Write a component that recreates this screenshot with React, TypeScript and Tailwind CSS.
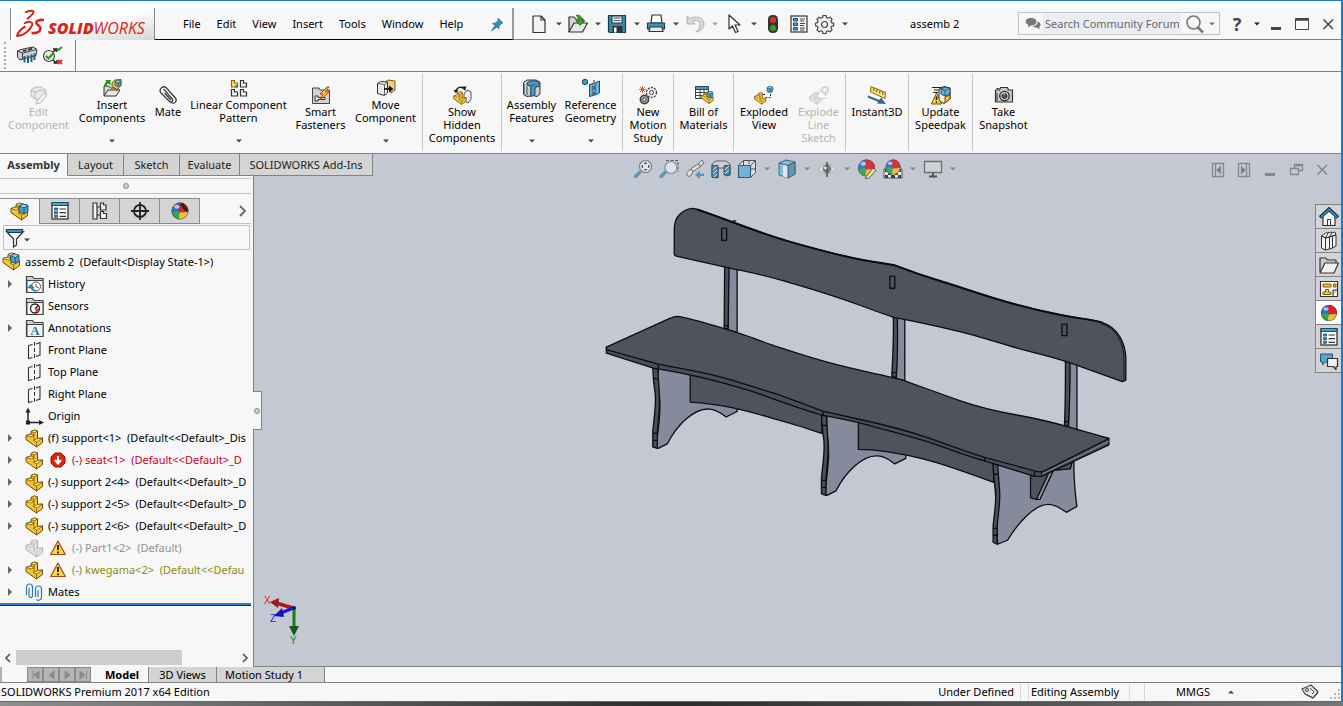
import React, { useState } from 'react';

type IconProps = { className?: string };

const PartShape = ({ fill = '#f5c52c', light = '#ffe58a', stroke = '#6b4a08' }: { fill?: string; light?: string; stroke?: string }) => (
  <g stroke={stroke} strokeWidth="1" strokeLinejoin="round">
    <path d="M1 6.500 6 5V2.500L9.500 1l3 1v7.500l5-.500v4.500l-6 4.500L1 10.500z" fill={fill} />
    <path d="M6 2.500 9.500 1l3 1L9 4zM1 6.500 6 5l3 1.500L6 8zM11.500 13l-3-1.500 4-2 5-.500z" fill={light} strokeWidth="0.7" />
    <path d="M9 4v7.500M11.500 13v5" fill="none" strokeWidth="0.7" />
  </g>
);

const Cube = ({ x = 8, y = 1, s = 1 }: { x?: number; y?: number; s?: number }) => (
  <g transform={`translate(${x} ${y}) scale(${s})`} stroke="#1d4e68" strokeWidth="0.9" strokeLinejoin="round">
    <path d="M0 2.500 4 .5 9 2v6L5 10.500 0 8.500z" fill="#4f9cc4" />
    <path d="M0 2.500 4 .5 9 2 5 4.200z" fill="#a9dcf2" />
    <path d="M5 4.200v6.300" />
  </g>
);

const Svg = ({ size = 20, vb = 20, className = '', children }: { size?: number; vb?: number; className?: string; children: React.ReactNode }) => (
  <svg width={size} height={size} viewBox={`0 0 ${vb} ${vb}`} className={`shrink-0 ${className}`} fill="none" aria-hidden="true">
    {children}
  </svg>
);

const PartIcon = ({ muted }: { muted?: boolean }) => (
  <Svg size={19} vb={19}>
    {muted ? <PartShape fill="#e2e2e2" light="#f2f2f2" stroke="#b0b0b0" /> : <PartShape />}
  </Svg>
);

const AssemblyIcon = () => (
  <Svg size={19} vb={19}>
    <PartShape />
    <Cube x={8.5} y={1.5} s={0.95} />
  </Svg>
);

const Ball = ({ cx = 10, cy = 10, r = 8 }: { cx?: number; cy?: number; r?: number }) => (
  <g transform={`translate(${cx} ${cy}) scale(${r / 8})`}>
    <circle r="8" fill="#2f6fd0" />
    <path d="M-1-7.900A8 8 0 0 1 7.900 1 L0 1.500C-2-1-2-5-1-7.900z" fill="#d8252c" />
    <path d="M7.900 1A8 8 0 0 1-1 7.900C-1 5-1 3 0 1.500z" fill="#eec32d" />
    <path d="M-1 7.900A8 8 0 0 1-7.900 1C-5 0-2 0 0 1.500-1 3-1 5-1 7.900z" fill="#35a843" />
    <circle r="7.600" stroke="#333" strokeOpacity="0.5" strokeWidth="0.8" fill="none" />
    <ellipse cx="-3" cy="-4" rx="2.600" ry="1.800" fill="#fff" fillOpacity="0.6" />
  </g>
);

const ListShape = () => (
  <g>
    <rect x="2" y="2" width="16" height="16" fill="#fff" stroke="#333" strokeWidth="1.300" />
    <rect x="2" y="1.500" width="16" height="3" fill="#4aa3cf" stroke="#1d4e68" />
    <path d="M4.500 7h3v2h-3zM4.500 10.700h3v2h-3zM4.500 14.300h3v2h-3z" fill="#4aa3cf" stroke="#1d4e68" strokeWidth="0.9" />
    <path d="M9.500 8h6.500M9.500 11.700h6.500M9.500 15.300h6.500" stroke="#333" strokeWidth="1.200" />
  </g>
);

const Caret = ({ className = 'text-[#444]' }: IconProps) => (
  <svg width="6" height="4" viewBox="0 0 6 4" className={`shrink-0 ${className}`} aria-hidden="true">
    <path d="M0 .5h6L3 3.500z" fill="currentColor" />
  </svg>
);

const Folder = ({ children }: { children: React.ReactNode }) => (
  <Svg size={19} vb={19}>
    <path d="M1.500 17.500V1.500h6l1.500 2h9v14z" fill="#cfcfcf" stroke="#444" strokeWidth="1.200" />
    <path d="M2 5.500h16v12H2z" fill="#f3f3f3" stroke="#444" />
    {children}
  </Svg>
);

const HistoryIcon = () => (
  <Folder>
    <circle cx="11" cy="11.500" r="4.500" fill="#fff" stroke="#555" />
    <path d="M11 9v2.500l2.500 1.500" stroke="#444" />
    <path d="M11 16c-3 0-5-2-5-4.500M3.500 12.500 6 10l2.500 2.500z" stroke="#2c83b4" strokeWidth="1.300" fill="#2c83b4" />
  </Folder>
);
const SensorsIcon = () => (
  <Folder>
    <circle cx="10" cy="11.500" r="4.500" fill="#fff" stroke="#222" strokeWidth="1.300" />
    <path d="m10 12 3-3.500" stroke="#222" strokeWidth="1.200" />
    <path d="M10.500 11.500h3.500a4 4 0 0 1-3.500 4z" fill="#e23a1e" />
  </Folder>
);
const AnnotationsIcon = () => (
  <Folder>
    <text x="10" y="16" textAnchor="middle" fontFamily="Liberation Serif, serif" fontWeight="bold" fontSize="13" fill="#2a7ba6">A</text>
  </Folder>
);
const PlaneIcon = () => (
  <Svg size={19} vb={19}>
    <path d="M3.500 4.500v13l4-1M11 15.500l4-1.500V1.500l-4 1.500M3.500 4.500l4-1" stroke="#333" strokeWidth="1.100" />
    <path d="M9.500 1v17" stroke="#333" strokeDasharray="4 2" />
  </Svg>
);
const OriginIcon = () => (
  <Svg size={19} vb={19}>
    <path d="M3 15.500V4M3 15.500h12" stroke="#222" strokeWidth="1.500" />
    <path d="M.500 5.500 3 .5l2.500 5zM14 13l5 2.500-5 2.500z" fill="#222" />
    <rect x="1" y="13.500" width="4" height="4" fill="#222" />
  </Svg>
);
const MatesIcon = () => (
  <Svg size={19} vb={19}>
    <path d="M1.500 12V4a3 3 0 0 1 6 0v9.500a2 2 0 0 1-3.500 0V5" stroke="#2c7ba6" strokeWidth="1.200" />
    <path d="M10.500 14V6a3 3 0 0 1 6 0v8.500a3 3 0 0 1-5 2M13 7v7" stroke="#2c7ba6" strokeWidth="1.200" />
  </Svg>
);
const WarningIcon = () => (
  <Svg size={16} vb={16}>
    <path d="M8 1 15.300 14.500H.700z" fill="#ffd83a" stroke="#a5431a" strokeWidth="1.200" strokeLinejoin="round" />
    <path d="M8 5v5M8 11.500v1.700" stroke="#111" strokeWidth="1.800" />
  </Svg>
);
const ErrorIcon = () => (
  <Svg size={16} vb={16}>
    <path d="M5 1h6l4 4v6l-4 4H5l-4-4V5z" fill="#df2612" stroke="#8f1408" />
    <path d="M8 4v7M5 8l3 3.500L11 8" stroke="#fff" strokeWidth="2" />
  </Svg>
);

/* ribbon */

const ribbonIcons: Record<string, React.ReactNode> = {
  edit: (
    <g stroke="#b9b9b9" fill="#e9e9e9" strokeLinejoin="round">
      <path d="m2 5 4-3 6 0 5 3v6l-5 4-6-1-4-3zM2 5l4 2 6-2 5 2M6 7v7" />
      <path d="m8 16 7-8 3 2.500L11 18l-4 1z" fill="#f4f4f4" />
    </g>
  ),
  insert: (
    <g>
      <path d="M2 18V8h5l1.500 2H16v3" fill="#d8d8d8" stroke="#333" />
      <path d="m2 18 4-6h12l-4 6z" fill="#e8e8e8" stroke="#333" strokeLinejoin="round" />
      <path d="M3 9C3 6 4 5 6 4" stroke="#2a8a18" strokeWidth="2" />
      <path d="M3 2h5.500v5.500z" fill="#2a8a18" />
      <path d="m10 5 3-3 6-.500v6l-4 4-5-3z" fill="#f5c52c" stroke="#6b4a08" strokeLinejoin="round" />
      <Cube x={13} y={2} s={0.65} />
    </g>
  ),
  mate: (
    <g stroke="#3a3a3a" strokeWidth="1.300" strokeLinecap="round">
      <path d="m6 4.500 8.500 9.500a2 2 0 0 1-3 2.500L3 8C.500 5 4-.500 8.500 3l8.500 9.500c3 3.500-.500 7-4 5M7 8.500l5.500 6" />
    </g>
  ),
  linear: (
    <g strokeWidth="1.200">
      <path d="M2.500 2.500h3v2.500h3v4h-6z" fill="#f9e46c" stroke="#8a6a10" />
      <path d="M6 7h3v2.500H6z" fill="#2c83b4" />
      <path d="M11.500 2.500h3v2.500h3v4h-6zM2.500 11.500h3V14h3v4h-6zM11.500 11.500h3V14h3v4h-6z" fill="#f3f3f3" stroke="#333" />
    </g>
  ),
  smart: (
    <g>
      <path d="M1.500 18.500V3H8l1 2h9.500v13.500z" fill="#d2d2d2" stroke="#444" />
      <path d="M4 16v-5h3v1.500h7v2H7V16z" fill="#eee" stroke="#333" />
      <path d="m16 2-7 7h3l-3 6 9-8h-4l4-5z" fill="#ffcf2a" stroke="#b9400f" strokeLinejoin="round" />
    </g>
  ),
  move: (
    <g strokeLinejoin="round">
      <path d="m9 4 3-2 7 1v9l-4 3z" fill="#ecd083" stroke="#7a5a12" />
      <path d="m1.500 5.500 3-2 7 .5v11l-3 2.500-7-2z" fill="#e9e9e9" stroke="#333" />
      <path d="m1.500 5.500 7 1 3-2.500M8.500 6.500V17" stroke="#555" strokeWidth="0.9" />
      <path d="M8 11h6" stroke="#111" strokeWidth="1.700" />
      <path d="m13 7.500 4.500 3.500-4.500 3.500z" fill="#111" />
    </g>
  ),
  show: (
    <g>
      <path d="m12 9 3-4 4 2v7l-3 4-4-2z" fill="#eee" stroke="#555" strokeLinejoin="round" />
      <g transform="translate(1 6) scale(.75)"><PartShape /></g>
      <path d="M4 6c1-4 6-5 8-2" stroke="#222" strokeWidth="1.500" />
      <path d="M1.500 5h5L4 8.500zM10 1.500h4.500L13 6z" fill="#222" />
    </g>
  ),
  features: (
    <g strokeLinejoin="round">
      <path d="M1.500 4.500 5 2h9l4 2v12l-3 2.500-4-1V8H9v10l-4 .5-3.500-2z" fill="#cdcdcd" stroke="#333" />
      <path d="m5 5 3-2h6l3 2v4l-3-1v2h-1v7l-4 1.500V8l-4-1z" fill="#4d9cc4" stroke="#1d4e68" />
      <path d="M9 8 13 6.500M2 6v10M5 8v9" stroke="#26566f" />
    </g>
  ),
  reference: (
    <g>
      <circle cx="4" cy="4" r="2.700" fill="#4a96bd" stroke="#1d4e68" />
      <path d="M8.500 6.500 12 5.500v12l-3.500 1zM14 5l4.500-2v12L14 17z" fill="#62b1d8" stroke="#1d4e68" />
      <path d="M13 2v17" stroke="#222" strokeDasharray="4 2" />
    </g>
  ),
  motion: (
    <g>
      <circle cx="13.500" cy="7.500" r="5" stroke="#444" strokeWidth="1.300" strokeDasharray="2 1.200" fill="#eee" />
      <circle cx="13.500" cy="7.500" r="2" fill="#fff" stroke="#444" />
      <circle cx="6.500" cy="14.500" r="4.200" stroke="#444" strokeWidth="1.500" fill="#999" />
      <circle cx="6.500" cy="14.500" r="1.500" fill="#fff" stroke="#444" />
      <path d="M4.500 1v7M1 4.500h7M2 2l5 5M7 2 2 7" stroke="#d8671a" />
    </g>
  ),
  bom: (
    <g>
      <path d="M1.500 1.500h13v12h-13z" fill="#fff" stroke="#234b63" />
      <path d="M1.500 1.500h13v3h-13z" fill="#4a96bd" stroke="#234b63" />
      <path d="M1.500 7.500h13M1.500 10.500h13M6 4.500v9M10 4.500v9" stroke="#444" />
      <g transform="translate(7 6) scale(.7)"><PartShape /></g>
      <Cube x={13} y={6} s={0.65} />
    </g>
  ),
  exploded: (
    <g>
      <g transform="translate(0 7) scale(.68)"><PartShape /></g>
      <Cube x={13} y={1} s={0.65} />
      <path d="M9 9.500h2.500M16.500 9v3.500H12" stroke="#222" strokeDasharray="2 1.300" />
    </g>
  ),
  explodeLine: (
    <g opacity="0.8">
      <g transform="translate(0 7) scale(.68)"><PartShape fill="#e2e2e2" light="#f2f2f2" stroke="#a8a8a8" /></g>
      <path d="m13 3 3-1.500L19 3v4l-3 1.500L13 7z" fill="#eee" stroke="#b0b0b0" />
      <path d="M9 9.500 11.500 5M16.500 9v5H12" stroke="#aaa" strokeDasharray="2 1.300" />
    </g>
  ),
  instant: (
    <g>
      <path d="m4 1.500 14.500 6-.5 6L3.500 7z" fill="#f9e07a" stroke="#8a6414" />
      <path d="m7 3-.3 3M10 4.200l-.3 3M13 5.500l-.3 3M16 6.700l-.3 3" stroke="#6b4a08" />
      <path d="m1 11.500 12 5" stroke="#2d6c8f" strokeWidth="2" />
      <path d="m14 12.500 5 6.500-9-.5z" fill="#2d6c8f" />
    </g>
  ),
  update: (
    <g strokeLinejoin="round">
      <path d="M1 2.500h10M3 5h6M2 7.500h5" stroke="#222" strokeWidth="1.200" />
      <path d="m8 4 5-2.500 6 1.500v11l-6 4.500-5-3z" fill="#f4f4f4" stroke="#222" />
      <path d="m10 4 4-2 5 1v6l-5 2-4-2z" fill="#62b1d8" stroke="#1d4e68" />
      <path d="m10 4 4 1.500 5-2.500M14 5.500V11" stroke="#1d4e68" strokeWidth="0.8" />
      <path d="m14 12 5-2v4l-5 4z" fill="#f5c52c" stroke="#6b4a08" />
      <path d="m5.500 8 5 11H.500z" fill="#ffd832" stroke="#7a4a00" />
      <path d="M5.500 11.500v3.500M5.500 16.200v1.500" stroke="#111" strokeWidth="1.600" />
    </g>
  ),
  camera: (
    <g>
      <path d="M1.500 5h4l1-2.500h7L14.500 5h4v12h-17z" fill="#c9c9c9" stroke="#333" strokeWidth="1.200" />
      <circle cx="10.500" cy="11" r="4.700" fill="#efefef" stroke="#222" strokeWidth="1.300" />
      <circle cx="10.500" cy="11" r="2.600" fill="#555" stroke="#222" />
      <path d="M2.500 3.500h2.500M3 8v8" stroke="#333" />
      <path d="m9.500 9.500 1.500-.5" stroke="#fff" />
    </g>
  ),
};

interface RibbonItem {
  icon: string;
  lines: string[];
  width: string;
  menu?: boolean;
  disabled?: boolean;
}

const ribbonGroups: RibbonItem[][] = [
  [
    { icon: 'edit', lines: ['Edit', 'Component'], width: 'w-[71px]', disabled: true },
    { icon: 'insert', lines: ['Insert', 'Components'], width: 'w-[76px]', menu: true },
    { icon: 'mate', lines: ['Mate'], width: 'w-9' },
    { icon: 'linear', lines: ['Linear Component', 'Pattern'], width: 'w-[105px]', menu: true },
    { icon: 'smart', lines: ['Smart', 'Fasteners'], width: 'w-[59px]' },
    { icon: 'move', lines: ['Move', 'Component'], width: 'w-[71px]', menu: true },
  ],
  [{ icon: 'show', lines: ['Show', 'Hidden', 'Components'], width: 'w-[76px]' }],
  [
    { icon: 'features', lines: ['Assembly', 'Features'], width: 'w-[57px]', menu: true },
    { icon: 'reference', lines: ['Reference', 'Geometry'], width: 'w-[61px]', menu: true },
  ],
  [{ icon: 'motion', lines: ['New', 'Motion', 'Study'], width: 'w-12' }],
  [{ icon: 'bom', lines: ['Bill of', 'Materials'], width: 'w-[57px]' }],
  [
    { icon: 'exploded', lines: ['Exploded', 'View'], width: 'w-[58px]' },
    { icon: 'explodeLine', lines: ['Explode', 'Line', 'Sketch'], width: 'w-[51px]', disabled: true },
  ],
  [{ icon: 'instant', lines: ['Instant3D'], width: 'w-[60px]' }],
  [{ icon: 'update', lines: ['Update', 'Speedpak'], width: 'w-[61px]' }],
  [{ icon: 'camera', lines: ['Take', 'Snapshot'], width: 'w-[59px]' }],
];

const Ribbon = () => (
  <div className="flex h-[82px] border-b border-[#828282] pl-0.5">
    {ribbonGroups.map((group, g) => (
      <div key={g} className={`my-0.5 flex px-px ${g < ribbonGroups.length - 1 ? 'border-r border-[#c6c6c6]' : ''}`}>
        {group.map(item => (
          <button
            key={item.icon}
            disabled={item.disabled}
            className={`flex flex-col items-center whitespace-nowrap leading-[13px] ${item.width} ${item.menu ? 'pt-1' : 'pt-[11px]'} ${item.disabled ? 'text-[#b4b4b4]' : 'text-black'}`}
          >
            <Svg>{ribbonIcons[item.icon]}</Svg>
            {item.lines.map(line => <span key={line}>{line}</span>)}
            {item.menu && <Caret className="mt-auto mb-2 text-[#444]" />}
          </button>
        ))}
      </div>
    ))}
  </div>
);

/* title bar */

const quickTools: { name: string; menu?: boolean; muted?: boolean; art: React.ReactNode }[] = [
  { name: 'New', menu: true, art: <path d="M4 2h8l4 4v12.500H4zM12 2v4h4" fill="#f2f2f2" stroke="#333" strokeWidth="1.200" strokeLinejoin="round" /> },
  {
    name: 'Open', menu: true, art: (
      <g strokeLinejoin="round">
        <path d="M1 18V3h5l1.500 2H15v4" fill="#d6d6d6" stroke="#333" strokeWidth="1.200" />
        <path d="m1 18 5-9h13.500l-5 9z" fill="#e8e8e8" stroke="#333" strokeWidth="1.200" />
        <path d="M8 1.500c4-1 6 1 6 5h3l-5 5-4-5h3c0-2-1-4-3-5z" fill="#3aa51e" stroke="#1f6b0d" strokeWidth="0.8" />
      </g>
    ),
  },
  {
    name: 'Save', menu: true, art: (
      <g>
        <path d="M1.500 1.500h17v17h-16l-1-1z" fill="#3c86a8" stroke="#173f54" strokeWidth="1.200" />
        <path d="M5 2h10v7H5z" fill="#f0f0f0" stroke="#173f54" />
        <path d="M6.500 4h7M6.500 6.500h7" stroke="#555" />
        <path d="M5.500 12h10v6.500h-10z" fill="#333" />
        <path d="M7 13.500h2.500v5H7z" fill="#fff" />
      </g>
    ),
  },
  {
    name: 'Print', menu: true, art: (
      <g strokeLinejoin="round">
        <path d="m5 9 1-8h9l1 8z" fill="#fff" stroke="#333" strokeWidth="1.200" />
        <path d="M1.500 9h17v6h-17z" fill="#3c93bd" stroke="#173f54" strokeWidth="1.200" />
        <path d="m4 13-1 4.500h14L16 13z" fill="#e9e9e9" stroke="#333" strokeWidth="1.200" />
      </g>
    ),
  },
  { name: 'Undo', menu: true, muted: true, art: <path d="M2 2v8h8L7.500 7.500C11 5 15 7 15 11c0 3-2 5-4 7 5-1 8-4 8-8C19 4 12 1 5.500 4.500z" fill="#d9d9d9" stroke="#b3b3b3" /> },
  { name: 'Select', menu: true, art: <path d="M5 1v14l3.500-3 3 6.500 2.500-1-3-6.500H16z" fill="#fff" stroke="#333" strokeWidth="1.200" strokeLinejoin="round" /> },
  {
    name: 'Rebuild', art: (
      <g>
        <rect x="5" y="1" width="10" height="18" rx="4.500" fill="#333" />
        <circle cx="10" cy="6" r="3" fill="#e0301c" /><circle cx="10" cy="14" r="3" fill="#3f9a24" />
      </g>
    ),
  },
  {
    name: 'File Properties', art: (
      <g>
        <rect x="2" y="2" width="16" height="16" fill="#f4f4f4" stroke="#333" strokeWidth="1.200" />
        <path d="M4.500 4.500h4v2.500h-4zM4.500 9h4v2.500h-4zM4.500 13.500h4V16h-4z" fill="#4aa3cf" stroke="#1d4e68" />
        <path d="M11 5h5M11 7h4M11 9.500h5M11 11.500h4M11 14h5M11 16h4" stroke="#444" />
      </g>
    ),
  },
  {
    name: 'Options', menu: true, art: (
      <g stroke="#444" transform="translate(-.5 -.5)">
        <path d="M8.500 2h3l.5 2 1.500.7 2-1 2 2-1 2 .6 1.500 2 .5v2.600l-2 .5-.6 1.500 1 2-2 2-2-1-1.500.7-.5 2h-3l-.5-2-1.500-.7-2 1-2-2 1-2-.6-1.500-2-.5V9.700l2-.5.6-1.500-1-2 2-2 2 1L8 4z" strokeWidth="1.200" fill="#f2f2f2" />
        <circle cx="10" cy="11" r="3" strokeWidth="1.200" />
      </g>
    ),
  },
];

const menus = ['File', 'Edit', 'View', 'Insert', 'Tools', 'Window', 'Help'];

const Logo = () => (
  <a href="#home" className="ml-2.5 flex w-[145px] shrink-0 items-center overflow-hidden border-x border-[#8a8a8a] bg-linear-to-br from-white via-white to-[#d6d6d6] pl-1 text-[#d9261c]">
    <svg width="33" height="30" viewBox="0 0 33 30" className="shrink-0" fill="none" stroke="currentColor" aria-hidden="true">
      <path d="M10 3.500C14 1 19.500 1 18.500 3.500 17.500 6 14.500 8 12 10" strokeWidth="2" />
      <path d="M9 14.500c5-3 9.500-2 8 2C15 21 8.500 27 2 27c1-3.500 4.500-7.500 8.500-9.500" strokeWidth="2" strokeLinejoin="round" />
      <path d="M29 11c-5-.5-8.500 1-7.500 3.300 1 2 4.500 3 4 5.700s-4 4.500-9 4" strokeWidth="2.600" />
    </svg>
    <span className="mt-2 font-['Open_Sans','Noto_Sans',sans-serif] text-base leading-none whitespace-nowrap italic">
      <b className="font-extrabold">SOLID</b>WORKS
    </span>
  </a>
);

const TitleBar = () => (
  <header className="flex h-8">
    <Logo />
    <nav className="flex shrink-0 items-center gap-4 border-r-2 border-b border-r-[#9a9a9a] border-b-black pr-[7px] pl-7">
      {menus.map(m => <button key={m}>{m}</button>)}
      <button aria-label="Pin menu" className="ml-2.5">
        <Svg size={16} vb={16}>
          <path d="m9 2 5 5-1.500.5-2.500 3v2.500l-2-2-5.500 4L6 9.500 3.500 7.500l3-.5 3-3z" fill="#3a8bb5" stroke="#2a6f94" strokeWidth="0.7" />
        </Svg>
      </button>
    </nav>
    <div className="flex min-w-0 flex-1 items-center border-b border-[#828282] pl-3">
      {quickTools.map(tool => (
        <React.Fragment key={tool.name}>
          <button aria-label={tool.name} className="flex w-[26px] justify-center"><Svg>{tool.art}</Svg></button>
          {tool.menu && (
            <button aria-label={`${tool.name} options`} className="flex h-5 w-[13px] items-center justify-center">
              <Caret className={tool.muted ? 'text-[#a5a5a5]' : 'text-[#444]'} />
            </button>
          )}
        </React.Fragment>
      ))}
      <h1 className="flex-1 text-center">assemb 2</h1>
      <div className="flex h-[23px] w-[202px] items-center border border-[#c2c2c2] px-1">
        <Svg size={16} vb={16} className="mx-0.5">
          <path d="M6 2c3 0 5.500 1.500 5.500 3.800S9 9.500 6 9.500l-3 2 .5-2.500C-1 7 0 2 6 2z" fill="#777" />
          <path d="M12.500 5.500C16 6.500 16.500 10 14 11l1 2.500-3.500-2c-1.500 0-3-.5-3.500-1.500 3 0 5-2 4.500-4.500z" fill="#777" />
        </Svg>
        <input
          aria-label="Search Community Forum"
          placeholder="Search Community Forum"
          className="h-[19px] w-[139px] min-w-0 bg-[#ebedf2] px-0.5 outline-none placeholder:text-[#686868]"
        />
        <button aria-label="Search" className="ml-1">
          <Svg>
            <circle cx="8.500" cy="8.500" r="6.500" stroke="#777" strokeWidth="1.600" />
            <path d="m13 13.500 5 5" stroke="#777" strokeWidth="2.500" />
          </Svg>
        </button>
        <Caret className="ml-1 text-[#777]" />
      </div>
      <button className="w-[34px] text-center text-lg leading-none font-bold text-[#444]" aria-label="Help">?</button>
      <Caret className="text-[#222]" />
      <div className="flex items-center gap-2 pr-1 pl-[7px]">
        <button aria-label="Minimize"><Svg size={18} vb={18}><path d="M4 13.500h10" stroke="#444" strokeWidth="3" /></Svg></button>
        <button aria-label="Maximize"><Svg size={18} vb={18}><path d="M2.500 3.500h13v11h-13z" stroke="#444" /><path d="M2.500 4.500h13" stroke="#444" strokeWidth="2.500" /></Svg></button>
        <button aria-label="Close"><Svg size={18} vb={18}><path d="m4.500 4.500 9.500 9.500M14 4.500 4.500 14" stroke="#444" strokeWidth="1.500" /></Svg></button>
      </div>
    </div>
  </header>
);

const SmallToolbar = () => (
  <div className="flex h-8 border-b border-[#828282]">
    <div className="flex w-[76px] items-center gap-1 border-r border-[#828282] pl-1">
      <div className="mr-1.5 h-[27px] border-l-2 border-dotted border-[#a5a5a5]" />
      <button aria-label="Component works">
        <Svg size={22} vb={22}>
          <path d="M1.500 6 5 4.500 17 2l4 2.500-1 6-11 3-5 1.500-2.500-3z" fill="#d0d0d0" stroke="#333" strokeLinejoin="round" />
          <path d="m1.500 6 5 2L21 4.500M6.500 8v6" stroke="#444" />
          <path d="M8.500 11v6.500M12 10.500V18M15.500 9.500V17M18.500 8.500V15" stroke="#1f6287" strokeWidth="2" />
          <path d="m7 6 3.500-.8M12 4.800l4-1" stroke="#222" strokeWidth="1.500" />
        </Svg>
      </button>
      <button aria-label="Check options">
        <Svg size={22} vb={22}>
          <circle cx="7" cy="11" r="5.500" fill="#e9e9e9" stroke="#444" strokeWidth="1.200" />
          <path d="m4 11 2.500 2.500L11 8.500" stroke="#2d9a1c" strokeWidth="2.200" />
          <path d="m11 7 3-2.500M11 15l3 2.500M11 4h3.500v3M11.500 18h3.500v-3" stroke="#222" strokeWidth="1.500" />
          <path d="m15 3.500 1.500 1.500L20 2" stroke="#2d9a1c" strokeWidth="2" />
          <path d="m16 15 4 4M20 15l-4 4" stroke="#d9331b" strokeWidth="2" />
        </Svg>
      </button>
    </div>
  </div>
);

/* feature tree */

interface TreeNode {
  label: string;
  icon: React.ReactNode;
  expandable?: boolean;
  state?: React.ReactNode;
  color?: string;
}

const treeNodes: TreeNode[] = [
  { label: 'History', icon: <HistoryIcon />, expandable: true },
  { label: 'Sensors', icon: <SensorsIcon /> },
  { label: 'Annotations', icon: <AnnotationsIcon />, expandable: true },
  { label: 'Front Plane', icon: <PlaneIcon /> },
  { label: 'Top Plane', icon: <PlaneIcon /> },
  { label: 'Right Plane', icon: <PlaneIcon /> },
  { label: 'Origin', icon: <OriginIcon /> },
  { label: '(f) support<1>  (Default<<Default>_Dis', icon: <PartIcon />, expandable: true },
  { label: '(-) seat<1>  (Default<<Default>_D', icon: <PartIcon />, expandable: true, state: <ErrorIcon />, color: 'text-[#c8001e]' },
  { label: '(-) support 2<4>  (Default<<Default>_D', icon: <PartIcon />, expandable: true },
  { label: '(-) support 2<5>  (Default<<Default>_D', icon: <PartIcon />, expandable: true },
  { label: '(-) support 2<6>  (Default<<Default>_D', icon: <PartIcon />, expandable: true },
  { label: '(-) Part1<2>  (Default)', icon: <PartIcon muted />, state: <WarningIcon />, color: 'text-[#909090]' },
  { label: '(-) kwegama<2>  (Default<<Defau', icon: <PartIcon />, expandable: true, state: <WarningIcon />, color: 'text-[#8b8b12]' },
  { label: 'Mates', icon: <MatesIcon />, expandable: true },
];

const panelTabs: { name: string; art: React.ReactNode }[] = [
  { name: 'Feature tree', art: <g><PartShape /><Cube x={9} y={1.500} /></g> },
  { name: 'Properties', art: <ListShape /> },
  {
    name: 'Configurations', art: (
      <g stroke="#333" strokeWidth="1.200" fill="#f4f4f4">
        <path d="M3 2h4v16H3zM7 6h4M7 14h4" />
        <path d="M10.500 2h3v2h2.500v5h-5.500zM10.500 10.500h3v2h3V17.500h-6z" />
      </g>
    ),
  },
  { name: 'Dimensions', art: <g stroke="#222" strokeWidth="1.800"><circle cx="10" cy="10" r="6" /><path d="M10 1v18M1 10h18" /></g> },
  { name: 'Display', art: <g><Ball r={8.500} /><path d="M10 3.500 13 2l5 7-2 2z" fill="#222" /></g> },
];

const FeaturePanel = () => (
  <aside className="relative flex w-[254px] shrink-0 flex-col border-r border-[#828282] bg-[#f7f7f7]">
    <div className="mt-0.5 mr-0.5 flex h-4 items-center justify-center border-y border-[#c2c2c2]">
      <span className="size-1.5 rounded-full border border-[#8a8a8a] bg-[#d0d0d0]" />
    </div>
    <div className="mt-1 mr-0.5 flex h-[26px]">
      {panelTabs.map((tab, i) => (
        <button
          key={tab.name}
          aria-label={tab.name}
          className={`flex w-10 items-center justify-center border-t border-r border-[#8a8a8a] ${i === 0 ? '' : 'border-b bg-[#d4d4d4]'}`}
        >
          <Svg>{tab.art}</Svg>
        </button>
      ))}
      <button aria-label="More tabs" className="flex flex-1 items-center justify-end border-b border-[#c2c2c2] pr-[3px]">
        <Svg size={12} vb={12}><path d="m4 1 5 5-5 5" stroke="#666" strokeWidth="1.800" /></Svg>
      </button>
    </div>
    <button aria-label="Filter" className="mx-[3px] mt-px flex h-[25px] items-center border border-[#c2c2c2] pl-px">
      <Svg>
        <path d="M1.500 3.500 8.500 11v8l3-2V11l7-7.500z" fill="#f4f4f4" stroke="#333" strokeWidth="1.200" />
        <path d="M1 1.500h17l-1.500 3H2.500z" fill="#3c93bd" stroke="#173f54" />
      </Svg>
      <Caret className="mt-1 -ml-px text-[#444]" />
    </button>
    <div className="mr-0.5 overflow-hidden border-b border-[#2020a0] whitespace-pre">
      <div className="border-b-2 border-[#2f7fc8]">
        <div className="flex h-[23px] items-center gap-1 pl-0.5"><AssemblyIcon /><span>assemb 2  (Default&lt;Display State-1&gt;)</span></div>
        <ul>
          {treeNodes.map(node => (
            <li key={node.label} className={`flex h-[22px] items-center ${node.color ?? 'text-black'}`}>
              <span className="flex w-[25px] shrink-0 pl-[7px]">
                {node.expandable && <Svg size={8} vb={8}><path d="M1 0l4 4-4 4z" fill="#666" /></Svg>}
              </span>
              {node.icon}
              {node.state && <span className="ml-1.5 shrink-0">{node.state}</span>}
              <span className={node.state ? 'ml-1.5' : 'ml-1'}>{node.label}</span>
            </li>
          ))}
        </ul>
      </div>
    </div>
    <div className="mt-auto mb-0.5 flex h-[15px] items-center">
      <button aria-label="Scroll left" className="flex w-4 justify-center"><Svg size={10} vb={10}><path d="M7 1 3 5l4 4" stroke="#555" strokeWidth="1.700" /></Svg></button>
      <div className="h-full flex-1"><div className="h-full w-3/4 bg-[#cdcdcd]" /></div>
      <button aria-label="Scroll right" className="flex w-4 justify-center"><Svg size={10} vb={10}><path d="m3 1 4 4-4 4" stroke="#555" strokeWidth="1.700" /></Svg></button>
    </div>
    <div className="absolute top-[215px] -right-[9px] flex h-[39px] w-[9px] items-center justify-center border-y border-r border-[#828282] bg-[#f7f7f7]">
      <span className="size-1.5 rounded-full border border-[#8a8a8a] bg-[#d0d0d0]" />
    </div>
  </aside>
);

/* graphics area */

const viewTools: { name: string; menu?: boolean; art: React.ReactNode }[] = [
  {
    name: 'Zoom to Fit', art: (
      <g>
        <path d="m1.500 18.500 6-6" stroke="#5595b5" strokeWidth="3.500" /><circle cx="12.500" cy="7.500" r="6" fill="#e6eaee" stroke="#777" strokeWidth="1.200" />
        <path d="m12.500 3 1.800 2h-3.600zM12.500 12l1.800-2h-3.600zM8 7.500l2-1.800v3.600zM17 7.500l-2-1.800v3.600z" fill="#333" />
      </g>
    ),
  },
  {
    name: 'Zoom to Area', art: (
      <g>
        <path d="M7 1.500h12V13" stroke="#555" strokeWidth="1.200" strokeDasharray="3 1.500" />
        <path d="m1 18.500 6-6" stroke="#5595b5" strokeWidth="3.500" /><circle cx="12" cy="8.500" r="6" fill="#dde8ee" stroke="#888" strokeWidth="1.200" />
      </g>
    ),
  },
  {
    name: 'Previous View', art: (
      <g strokeLinejoin="round">
        <path d="m1.500 14 4-4L8 12.500l-2 4-3 1zM5.500 10l8-5.500 2 3L8 12.500zM13.500 4.500 17 1l2 3-3.500 3.500z" fill="#e2e2e2" stroke="#666" />
        <path d="M19 14.500h-4v-3l-5 4.500 5 4v-3h4z" fill="#4a93b8" />
      </g>
    ),
  },
  {
    name: 'Section View', art: (
      <g>
        <path d="m1 5 4-3h10l4 3v11l-4 1V9H7v10l-6-1z" fill="#cfd2d6" stroke="#555" />
        <path d="M1 6.500h6V18.500H1zM13 6.500h6V16h-6z" fill="#3c86ab" stroke="#1d4e68" /><path d="m2 11 4-4M2 15l4-4M3 18l3-3M14 11l4-4M14 15l4-4" stroke="#cfe7f2" />
      </g>
    ),
  },
  {
    name: 'View Orientation', menu: true, art: (
      <g>
        <path d="m1.500 6 5-4.500h12v12l-5 5M6.500 1.500v5M12 2v3M14 10h4" fill="#dde1e6" stroke="#444" />
        <path d="M1.500 6.500h12v12h-12z" fill="#6bb0d0" stroke="#26566f" strokeWidth="1.200" /><path d="m13.500 6.500 5-5" stroke="#444" />
      </g>
    ),
  },
  {
    name: 'Display Style', menu: true, art: (
      <g stroke="#3c5a6b" strokeLinejoin="round">
        <path d="m2 4 7-3 9 2v12l-7 4-9-3z" fill="#7cbbd8" /><path d="M11 6.500V19l7-4V3z" fill="#5593b3" /><path d="M6 5v12.500l5 1.500V6.500z" fill="#d9ecf5" stroke="none" /><path d="m2 4 9 2.500L18 3M11 6.500V19" />
      </g>
    ),
  },
  {
    name: 'Hide/Show Items', menu: true, art: (
      <g>
        <path d="M1 10.500c5-7 13-7 18 0-5 6-13 6-18 0z" fill="#d8dbe0" stroke="#aaa" /><circle cx="10" cy="10" r="4.300" fill="#777" /><path d="M10 3v15" stroke="#444" strokeWidth="1.500" /><circle cx="8.500" cy="9" r="1.300" fill="#fff" />
      </g>
    ),
  },
  { name: 'Edit Appearance', art: <g><Ball cx={9.500} cy={9} r={8.500} /><path d="m9 18 7-9 3 2.500-7 7.500-4 1z" fill="#f3e0a0" stroke="#555" /></g> },
  {
    name: 'Apply Scene', menu: true, art: (
      <g>
        <path d="M1 10h18v9H1z" fill="#eee" stroke="#444" /><path d="M2 10h3v3H2zM2 16h3v3H2zM5 13h3v3H5zM8 16h4v3H8zM12 13h3v3h-3zM15 10h3v3h-3zM15 16h3v3h-3z" fill="#333" /><Ball cx={10} cy={8} r={7.500} />
      </g>
    ),
  },
  {
    name: 'View Settings', menu: true, art: (
      <g><path d="M1.500 2.500h17v11h-17z" fill="#d2d5da" stroke="#666" strokeWidth="1.300" /><path d="M10 14v4M6 17.500h8" stroke="#444" strokeWidth="1.800" /></g>
    ),
  },
];

const windowControls: { name: string; art: React.ReactNode }[] = [
  { name: 'Collapse left', art: <g><path d="M3.500 3.500h11v13h-11zM6.500 4v12" /><path d="M11.500 7v6l-3.500-3z" fill="#777" /></g> },
  { name: 'Collapse right', art: <g><path d="M3.500 3.500h11v13h-11zM11.500 4v12" /><path d="M6.500 7v6L10 10z" fill="#777" /></g> },
  { name: 'Minimize document', art: <path d="M4 14.500h10" strokeWidth="3" /> },
  { name: 'Restore document', art: <path d="M3.500 8.500h8v6h-8zM7.500 8V4.500h8v6H12M7.500 5.500h8" /> },
  { name: 'Close document', art: <path d="m4.500 5 9.500 9.500M14 5l-9.500 9.500" strokeWidth="1.500" /> },
];

const Support = ({ x, y }: { x: number; y: number }) => (
  <g transform={`translate(${x} ${y})`}>
    <path d="M653 368H737V412L726 417.500C721 414 717 410 709 409.500C694 408.500 677 425 667 444.500L658 449L656.500 448C656 434 662 415 659 395Q657 380 658 368z" fill="#858a9d" />
    <path d="M652.500 369Q653 382 655 395C656 410 652.500 425 652.500 434V447.500L657 449V434C657.500 422 660 410 659 395L657.500 369z" fill="#4c4e59" />
    <path d="M652.500 379h5M652.500 434h4.500M652.500 441h4.500" />
  </g>
);

const Bench = () => (
  <svg viewBox="254 176 1087 491" className="absolute inset-0 size-full" fill="none" stroke="#0c0d10" strokeWidth="1.300" strokeLinejoin="round" role="img" aria-label="Bench assembly">
    <g>
      <path d="M728 266H737V333L728 330z" fill="#858a9d" />
      <path d="M724.500 266 724 329H728L729 266z" fill="#4c4e59" />
      <path d="M897 316H905V381L896 379z" fill="#858a9d" />
      <path d="M893.500 316C894 335 893 358 892 376.500L896.500 378C898 358 898 338 897.500 316z" fill="#4c4e59" />
      <path d="M1070 362H1077.500V431L1069 428z" fill="#858a9d" />
      <path d="M1066 362C1066 385 1066 405 1065 425.500L1069 427C1070 404 1071 386 1070.500 362z" fill="#4c4e59" />
      <path d="M892 373h5M1065 422h4.500M724 326h4.500" />
    </g>
    <path d="M674 254V229C674 216 683 209 693 208.500L697 209.500C728 220 756 232 787 241S850 259 880 263L895 265.500C912 272 930 278 943 282S975 292.500 993 298S1037 310.500 1060 315S1092 319.500 1103 323C1119 328 1126 344 1126.500 358V380.500L1123 382C1106 376 1090 370 1073 364S1047 356 1027 351S983 337.500 960 332S917 322 895 318C883 314 872 310 860 305.500S813 289.500 787 282S752 273 733 269L677 256.500Q674 256 674 254z" fill="#50525d" />
    <path d="M697 209.500C728 220 756 232 787 241S850 259 880 263L895 265.500C912 272 930 278 943 282S975 292.500 993 298S1037 310.500 1060 315S1092 319.500 1103 323" strokeWidth="2" />
    <path d="M1102 324C1117 328 1124 344 1124.500 358V381" strokeWidth="0.8" />
    <path d="M733 223v-2h3M721.500 228.500h5v12h-5zM890 276.500h5v12h-5zM1062.500 324.500h5v11.500h-5z" />

    <Support x={0} y={0} />
    <path d="M690 370V402.500C720 404 745 411 770 418S806 428 822 434V405z" fill="#50525d" />
    <Support x={169} y={47} />
    <path d="M858.500 416V450C880 450 905 455 925 460S975 476 994 483V457z" fill="#50525d" />
    <path d="M994 463H1074.500V470Q1075 490 1077.500 507L1067 513C1061 509 1056 505 1049 505C1035 505 1018 524 1008 541L998 545L996 497z" fill="#858a9d" />
    <path d="M993.500 465Q994 480 996 491C997 507 993.500 520 993.500 529V543L997.500 545V529C998 517 1001 505 1000 491L998 465z" fill="#4c4e59" />
    <path d="M993.500 475h5M993.500 529h4.500M993.500 536h4.500" />
    <path d="M1054 471 1071 469.500 1073 461zM1031 474V498.500L1037 500 1051 473z" fill="#50525d" />
    <path d="M1037 500H1040.500L1053.500 472H1050z" fill="#9297a8" />

    <path d="M606 347.500V353.500L653 368.500C673 372 690 375 710 380S748 390 767 397S803 410 822 415.500C840 419 850 420.500 860 423.500S903 434 927 442S965 456 985 461.500L1035 477H1042L1109.500 445.500V439z" fill="#4c4e59" />
    <path d="M606 347.500 670 318.500Q676 315.500 682 317.500C702 322 718 327 737 333S763 342.500 780 348S813 359 833 364S865 372 880 375L903 380.500C921 387 940 394 960 401S998 412 1020 416S1050 422 1067 427L1109.500 439 1045 471.500Q1040 473.500 1035 471.500L985 458C966 452 947 445 927 438S883 425 860 420L823 411.500C804 405 786 397 767 391.500S735 381 717 376.500S680 369 658 364.500L606 350z" fill="#50525d" />
    <path d="M658 365v4M823 412v4M985 458v4M1035 472v5M1042 472v4" />
    <path d="M1042 475 1109.500 442" stroke="#9297a8" strokeWidth="0.8" />
  </svg>
);

const Triad = () => (
  <svg width="40" height="54" viewBox="0 0 40 54" className="absolute bottom-[18px] left-[8px] font-['Liberation_Sans',sans-serif] text-[10px]" aria-label="Axes">
    <path d="M31 14 14 9" stroke="#b01818" strokeWidth="3.500" />
    <path d="m17 4-9 4 8 6z" fill="#a01616" />
    <path d="m31 14-12 5" stroke="#1a1ad0" strokeWidth="3.500" />
    <path d="m20 14-8 8 10 1z" fill="#1414b0" />
    <path d="M32 14v22" stroke="#1d7a1d" strokeWidth="3" />
    <path d="M27 32h10l-5 10z" fill="#14571a" />
    <circle cx="32" cy="14" r="2" fill="#101080" />
    <text x="2" y="10" fill="#e02020">X</text>
    <text x="8" y="28" fill="#1a1aff">Z</text>
    <text x="28" y="50" fill="#128a12">Y</text>
  </svg>
);

const taskTabs: { name: string; art: React.ReactNode }[] = [
  {
    name: 'Resources', art: (
      <g><path d="M4 9v9.500h12V9l-6-5z" fill="#f4f4f4" stroke="#333" strokeWidth="1.200" /><path d="M8.500 18.500v-6h3v6" stroke="#333" /><path d="M1 10.500 10 2l9 8.500" stroke="#173f54" strokeWidth="3.500" /><path d="M2 10 10 2.500l8 7.500" stroke="#3c93bd" strokeWidth="1.500" /></g>
    ),
  },
  {
    name: 'Design Library', art: (
      <g fill="#f1f1f1" stroke="#333" strokeLinejoin="round"><path d="m2.500 5 4 2v12l-4-2zM6.500 7l4-1v12l-4 1zM10.500 6l3-1v12l-3 1zM13.500 5l3.500-1v11l-3.500 2zM2.500 5l5-3.500L9 2l3-1 1.500.7 2.500-.7 1 3-3.500 1-3 1-4 1zM9 2 6.500 7M13 1.500 10.500 6" /></g>
    ),
  },
  {
    name: 'File Explorer', art: (
      <g stroke="#333" strokeWidth="1.200" strokeLinejoin="round"><path d="M1 17V3h6l1.500 2H17v3" fill="#c9c9c9" /><path d="m1 18 5-10h13.500L15 18z" fill="#f1f1f1" /></g>
    ),
  },
  {
    name: 'View Palette', art: (
      <g><path d="M1.500 2.500h17v15h-17z" fill="#fff" stroke="#333" strokeWidth="1.200" /><path d="M4 5h8v3H4zM14.500 5H17v3h-2.500zM6.500 10.500h3v2.500H12v2.500H4V13h2.500z" fill="#f5c52c" stroke="#7a5a12" /><path d="M14 17v-6h4.500" stroke="#333" fill="#ccc" /></g>
    ),
  },
  { name: 'Appearances', art: <Ball /> },
  { name: 'Custom Properties', art: <ListShape /> },
  {
    name: 'Forum', art: (
      <g strokeLinejoin="round"><path d="M1.500 3h12v8h-7l-3 3v-3h-2z" fill="#5ba5c9" stroke="#26566f" /><path d="M8.500 7.500h10v8H17v3l-3-3H8.500z" fill="#f1f1f1" stroke="#333" strokeWidth="1.200" /></g>
    ),
  },
];

const TaskPane = () => (
  <div className="absolute top-7 right-0 flex w-[26px] flex-col border-t border-l border-[#828282]">
    {taskTabs.map(tab => (
      <button
        key={tab.name}
        aria-label={tab.name}
        className={`flex h-6 items-center justify-center border-b border-[#828282] ${tab.name === 'Appearances' ? 'bg-white' : 'bg-[#d4d4d4]'}`}
      >
        <Svg>{tab.art}</Svg>
      </button>
    ))}
  </div>
);

const commandTabs = [
  { name: 'Assembly', width: 'w-[68px]' },
  { name: 'Layout', width: 'w-14' },
  { name: 'Sketch', width: 'w-14' },
  { name: 'Evaluate', width: 'w-[60px]' },
  { name: 'SOLIDWORKS Add-Ins', width: 'w-[133px]' },
];

const bottomTabs = [
  { name: 'Model', width: 'w-[57px]' },
  { name: '3D Views', width: 'w-[68px]' },
  { name: 'Motion Study 1', width: 'w-[108px] pl-2 text-left' },
];

export default function App() {
  const [tab, setTab] = useState('Assembly');
  const [sheet, setSheet] = useState('Model');

  return (
    <div className="flex min-h-screen flex-col border-t border-t-[#1979ca] bg-[#f7f7f7] font-['Noto_Sans','Open_Sans',sans-serif] text-[11px] leading-4 text-black">
      <div className="flex flex-1 flex-col border-r-2 border-b border-[#1979ca]">
        <div className="h-[7px] bg-white" />
        <TitleBar />
        <SmallToolbar />
        <Ribbon />

        <main className="flex flex-1 flex-col bg-[#c4c8d3]">
          <div className="z-10 flex h-[22px] items-start">
            <div className="flex h-[22px] shrink-0">
              {commandTabs.map(t => (
                <button
                  key={t.name}
                  onClick={() => setTab(t.name)}
                  className={`border-r border-b border-[#828282] whitespace-nowrap ${t.width} ${t.name === tab ? 'border-b-transparent bg-[#f7f7f7] font-bold text-[#333]' : 'bg-[#d4d4d4] text-[#222]'}`}
                >
                  {t.name}
                </button>
              ))}
            </div>
            <div className="flex h-[30px] flex-1 items-center justify-center pl-2">
              {viewTools.map(tool => (
                <React.Fragment key={tool.name}>
                  <button aria-label={tool.name} className="flex w-[26px] justify-center opacity-90"><Svg>{tool.art}</Svg></button>
                  {tool.menu && <span className="flex w-3.5 justify-center"><Caret className="text-[#888]" /></span>}
                </React.Fragment>
              ))}
            </div>
            <div className="flex h-[30px] items-center gap-2 pr-2.5">
              {windowControls.map(c => (
                <button key={c.name} aria-label={c.name}><Svg size={18} vb={18}><g stroke="#85888f" strokeWidth="1.300">{c.art}</g></Svg></button>
              ))}
            </div>
          </div>
          <div className="flex flex-1">
            <FeaturePanel />
            <section className="relative flex-1 border-b border-[#828282]">
              <Bench />
              <Triad />
              <TaskPane />
            </section>
          </div>
        </main>

        <div className="flex h-4 border-b border-[#828282]">
          <div className="flex w-[92px] border-l-2 border-[#9fb9bc] pl-[25px]">
            {['M4 2v8M10 2 5 6l5 4z', 'M9 2 4 6l5 4z', 'M4 2l5 4-5 4z', 'M3 2l5 4-5 4zM9.500 2v8'].map((d, i) => (
              <button key={d} aria-label={['First', 'Previous', 'Next', 'Last'][i]} className="w-4 border border-[#8a8a8a] bg-[#b4b4b4] pl-px">
                <Svg size={12} vb={12}><path d={d} fill="#8a8a8a" stroke="#8a8a8a" /></Svg>
              </button>
            ))}
          </div>
          {bottomTabs.map(t => (
            <button
              key={t.name}
              onClick={() => setSheet(t.name)}
              className={`border-r border-[#828282] leading-[13px] whitespace-nowrap ${t.width} ${t.name === sheet ? 'pl-1 font-bold' : 'bg-[#d4d4d4]'}`}
            >
              {t.name}
            </button>
          ))}
        </div>

        <footer className="flex h-[18px] items-center">
          <span className="mr-auto pl-px">SOLIDWORKS Premium 2017 x64 Edition</span>
          <span className="flex h-4 items-center border-r border-[#d5d5d5] px-1.5">Under Defined</span>
          <span className="ml-[7px] flex h-4 w-[102px] items-center border-x border-[#d5d5d5] pl-0.5">Editing Assembly</span>
          <span className="ml-3.5 flex h-4 items-center border-l border-[#d5d5d5] pl-[31px]">MMGS</span>
          <Caret className="mr-[67px] ml-[18px] rotate-180 text-[#444]" />
          <Svg size={18} vb={18}>
            <path d="m1 6 9-4 7 7-5 6-8-4z" fill="#e8e8e8" stroke="#444" strokeWidth="1.200" strokeLinejoin="round" />
            <circle cx="6" cy="7" r="1.500" stroke="#444" /><path d="m9 5 4 4-2 2M4 11l8 4 5-5" stroke="#444" />
          </Svg>
          <svg width="12" height="12" viewBox="0 0 12 12" className="mt-1 ml-2.5" aria-hidden="true">
            <path d="M9 1h2v2H9zM5 5h2v2H5zM9 5h2v2H9zM1 9h2v2H1zM5 9h2v2H5zM9 9h2v2H9z" fill="#b9b9b9" />
          </svg>
        </footer>
      </div>
      <div className="h-1 bg-linear-to-r from-[#8f8f8f] via-[#2c2c2c] to-[#777777]" />
    </div>
  );
}
